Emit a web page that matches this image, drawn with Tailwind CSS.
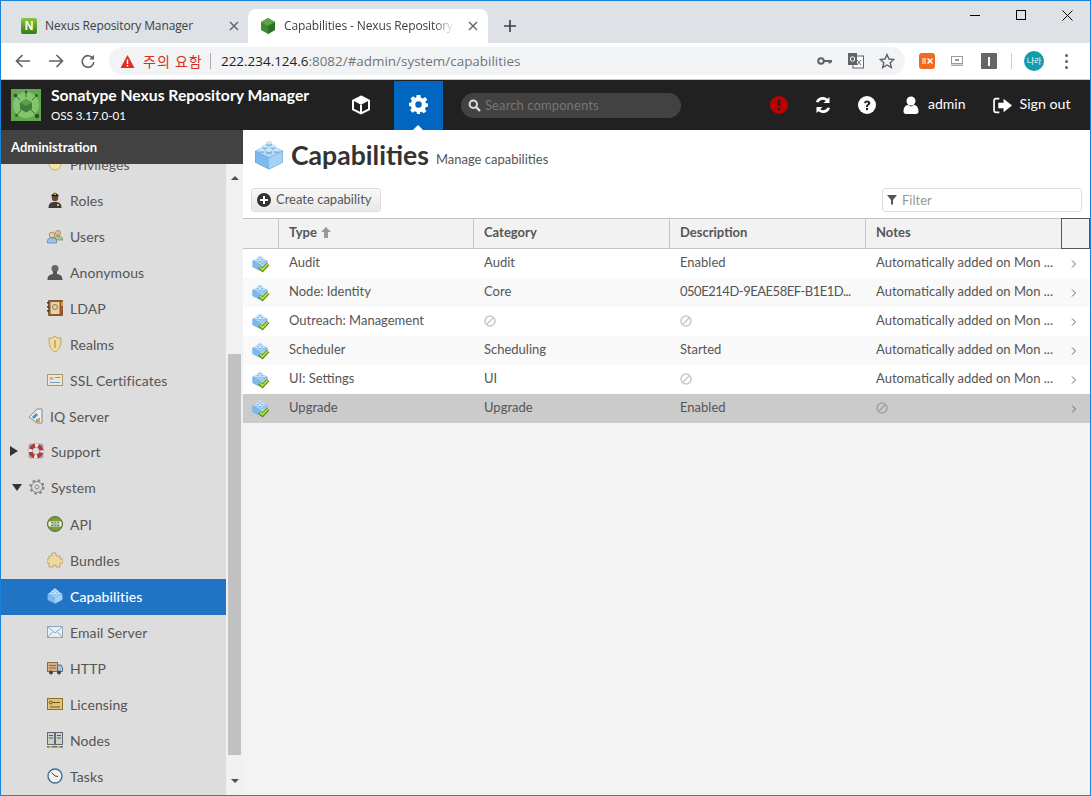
<!DOCTYPE html>
<html lang="en">
<head>
	<meta charset="UTF-8">
	<title>Capabilities - Nexus Repository Manager</title>
	<script src="https://cdn.jsdelivr.net/npm/@tailwindcss/browser@4"></script>
</head>
<body class="w-[1091px] h-[796px] overflow-hidden font-['Lato','Open_Sans',sans-serif]">
	<svg class="hidden">
		<symbol id="cube" viewBox="0 0 30 30">
			<path d="M15 4 29 11V22.500L15 29.500 1 22.500V11Z" fill="#5c9ad4"/>
			<path d="M1.500 11.500 15 18V29L1.500 22.200Z" fill="#7db9ee"/>
			<path d="M28.500 11.500 15 18V29L28.500 22.200Z" fill="#a6d2f6"/>
			<path d="M1.800 11 15 4.500 28.200 11 15 17.500Z" fill="#b5daf8"/>
			<path d="M9 6V8.500C9 9.800 13 9.800 13 8.500V6Z" fill="#7fb6e6"/>
			<ellipse cx="11" cy="6" rx="3" ry="1.700" fill="#cfe7fb"/>
			<path d="M17 6V8.500C17 9.800 21 9.800 21 8.500V6Z" fill="#7fb6e6"/>
			<ellipse cx="19" cy="6" rx="3" ry="1.700" fill="#cfe7fb"/>
			<path d="M12 2.500V5C12 6.300 18 6.300 18 5V2.500Z" fill="#7fb6e6"/>
			<ellipse cx="15" cy="2.700" rx="3.200" ry="1.800" fill="#cfe7fb"/>
			<path d="M5 10V12C5 13.300 10 13.300 10 12V10Z" fill="#7fb6e6"/>
			<ellipse cx="7.500" cy="10" rx="2.800" ry="1.600" fill="#cfe7fb"/>
			<path d="M20 10V12C20 13.300 25 13.300 25 12V10Z" fill="#7fb6e6"/>
			<ellipse cx="22.500" cy="10" rx="2.800" ry="1.600" fill="#cfe7fb"/>
			<path d="M12 10V13C12 14.300 18 14.300 18 13V10Z" fill="#7fb6e6"/>
			<ellipse cx="15" cy="10" rx="3.200" ry="1.800" fill="#cfe7fb"/>
		</symbol>
		<symbol id="cube-ok" viewBox="0 0 18 18">
			<svg x="0" y="0" width="16" height="16" viewBox="0 0 30 30"><use href="#cube" width="30" height="30"/></svg>
			<path d="M7.500 12 10.500 15 16 9" fill="none" stroke="#4f7f10" stroke-width="3.600"/>
			<path d="M7.800 12 10.500 14.700 15.700 9.200" fill="none" stroke="#b4e23a" stroke-width="1.900"/>
		</symbol>
		<symbol id="none" viewBox="0 0 12 12">
			<circle cx="6" cy="6" r="5" fill="none" stroke="currentColor" stroke-width="1.500"/>
			<path d="M2.700 9.300 9.300 2.700" stroke="currentColor" stroke-width="1.500"/>
		</symbol>
		<symbol id="chev" viewBox="0 0 8 10">
			<path d="M2 1.500 5.500 5 2 8.500" fill="none" stroke="#666" stroke-width="1"/>
		</symbol>
	</svg>

	<div class="w-full h-full border border-[#1883d7] flex flex-col bg-white">

		<!-- tab strip -->
		<div class="h-[42px] shrink-0 bg-[#dee1e6] flex items-end pl-[8px] relative font-['Open_Sans',sans-serif] text-[12px] text-[#3c4043]">
			<div class="w-[239px] h-[34px] flex items-center pl-[12px] pr-[9px]">
				<div class="w-[16px] h-[16px] bg-gradient-to-b from-[#8cc63f] to-[#2f7d10] rounded-[2px] text-white text-[12px] leading-[16px] font-bold text-center font-['Liberation_Sans',sans-serif]">N</div>
				<span class="ml-[8px] grow whitespace-nowrap tracking-[-.12px]">Nexus Repository Manager</span>
				<svg class="w-[10px] h-[10px]" viewBox="0 0 10 10"><path d="M1 1 9 9M9 1 1 9" stroke="#5f6368" stroke-width="1.400"/></svg>
			</div>
			<div class="w-[240px] h-[34px] bg-white rounded-t-[8px] flex items-center pl-[12px] pr-[10px]">
				<svg class="w-[16px] h-[16px] shrink-0" viewBox="0 0 16 16"><path d="M8 0 15 4V12L8 16 1 12V4Z" fill="#3e8a35"/><path d="M8 0 15 4 8 8 1 4Z" fill="#5aa548"/><path d="M8 8 15 4V12L8 16Z" fill="#2f7028"/></svg>
				<span class="ml-[8px] w-[170px] overflow-hidden whitespace-nowrap tracking-[-.12px] [mask-image:linear-gradient(to_right,black_88%,transparent)]">Capabilities - Nexus Repository</span>
				<svg class="w-[10px] h-[10px] ml-auto" viewBox="0 0 10 10"><path d="M1 1 9 9M9 1 1 9" stroke="#5f6368" stroke-width="1.400"/></svg>
			</div>
			<svg class="w-[12px] h-[12px] ml-[16px] mb-[11px]" viewBox="0 0 12 12"><path d="M6 0V12M0 6H12" stroke="#3c4043" stroke-width="1.600"/></svg>
			<div class="absolute right-0 top-0 flex text-black">
				<div class="w-[46px] h-[28px] flex items-center justify-center"><div class="w-[10px] h-px bg-black"></div></div>
				<div class="w-[46px] h-[28px] flex items-center justify-center"><div class="w-[10px] h-[10px] border border-black"></div></div>
				<div class="w-[46px] h-[28px] flex items-center justify-center"><svg class="w-[11px] h-[11px]" viewBox="0 0 11 11"><path d="M.5.5 10.500 10.500M10.500.5.5 10.500" stroke="#000" stroke-width="1"/></svg></div>
			</div>
		</div>

		<!-- browser toolbar -->
		<div class="h-[37px] shrink-0 bg-white border-b border-[#c8c8c8] flex items-center font-['Open_Sans',sans-serif]">
			<div class="w-[108px] flex items-center pl-[14px] gap-[17px]">
				<svg class="w-[16px] h-[14px]" viewBox="0 0 16 14"><path d="M15 7H2M7.500 1 1.500 7 7.500 13" fill="none" stroke="#5f6368" stroke-width="1.700"/></svg>
				<svg class="w-[16px] h-[14px]" viewBox="0 0 16 14"><path d="M1 7H14M8.500 1 14.500 7 8.500 13" fill="none" stroke="#5f6368" stroke-width="1.700"/></svg>
				<svg class="w-[14px] h-[14px]" viewBox="0 0 14 14"><path d="M12 4.500A5.800 5.800 0 1 0 12.800 8" fill="none" stroke="#5f6368" stroke-width="1.600"/><path d="M13 .8V5.500H8.300Z" fill="#5f6368"/></svg>
			</div>
			<div class="w-[796px] h-[28px] bg-[#f1f3f4] rounded-full flex items-center pl-[11px] text-[14px]">
				<svg class="w-[15px] h-[13px] shrink-0" viewBox="0 0 14 13"><path d="M7 0 14 13H0Z" fill="#d93025"/><path d="M6.300 4.500H7.700V9H6.300ZM6.300 10H7.700V11.400H6.300Z" fill="#fff"/></svg>
				<span class="ml-[8px] w-[60px] text-[#d93025] font-['Noto_Sans_CJK_KR',sans-serif] leading-none tracking-[1px] whitespace-nowrap">주의 요함</span>
				<div class="w-px h-[16px] bg-[#aaa] ml-[7px]"></div>
				<span class="ml-[10px] mt-[1px] text-[13.45px] text-[#202124] whitespace-nowrap">222.234.124.6<span class="text-[#70757a]">:8082/#admin/system/capabilities</span></span>
				<div class="ml-auto flex items-center gap-[15px] pr-[10px]">
					<svg class="w-[16px] h-[8px]" viewBox="0 0 16 8"><circle cx="4" cy="4" r="2.800" fill="none" stroke="#5f6368" stroke-width="2"/><path d="M7 3H15V5.500H13.500V6.500H11.500V5H7Z" fill="#5f6368"/></svg>
					<svg class="w-[16px] h-[16px]" viewBox="0 0 16 16"><rect x="5" y="3" width="10.500" height="12" fill="#fff" stroke="#5f6368"/><path d="M9 7 13 12M13 7 9 12" stroke="#5f6368"/><rect x="0" y="0" width="9" height="12" fill="#5f6368"/><circle cx="4.500" cy="6" r="2.200" fill="none" stroke="#fff"/></svg>
					<svg class="w-[16px] h-[16px]" viewBox="0 0 16 16"><path d="M8 1.500 10 6 14.800 6.500 11.200 9.700 12.300 14.500 8 12 3.700 14.500 4.800 9.700 1.200 6.500 6 6Z" fill="none" stroke="#5f6368" stroke-width="1.400"/></svg>
				</div>
			</div>
			<div class="flex items-center grow">
				<div class="ml-[14px] w-[16px] h-[16px] rounded-[3px] bg-[#f26a21] flex items-center justify-center gap-[1px]"><div class="w-[4px] h-[6px] bg-[#f8b48c]"></div><svg class="w-[6px] h-[6px]" viewBox="0 0 6 6"><path d="M.5.5 5.500 5.500M5.500.5.5 5.500" stroke="#fff" stroke-width="1.500"/></svg></div>
				<svg class="ml-[16px] w-[12px] h-[10px]" viewBox="0 0 12 10"><rect x=".5" y=".5" width="11" height="7" fill="#fff" stroke="#999"/><rect x="4" y="3" width="4" height="2" fill="#999"/><rect y="8.500" width="12" height="1.500" fill="#aaa"/></svg>
				<div class="ml-[18px] w-[16px] h-[16px] rounded-[1px] bg-[#666] flex items-center justify-center"><div class="w-[2px] h-[9px] bg-white"></div></div>
				<div class="ml-[14px] w-px h-[16px] bg-[#ccc]"></div>
				<div class="ml-[12px] w-[20px] h-[20px] rounded-full bg-[#0f9cad] text-white text-[8px] leading-[20px] text-center font-['Noto_Sans_CJK_KR',sans-serif]">나라</div>
				<div class="ml-[21px] flex flex-col gap-[3px]">
					<div class="w-[3px] h-[3px] rounded-full bg-[#5f6368]"></div>
					<div class="w-[3px] h-[3px] rounded-full bg-[#5f6368]"></div>
					<div class="w-[3px] h-[3px] rounded-full bg-[#5f6368]"></div>
				</div>
			</div>
		</div>

		<!-- nexus header -->
		<div class="h-[50px] shrink-0 bg-[#212121] flex items-center text-white">
			<svg class="ml-[10px] w-[30px] h-[32px] shrink-0" viewBox="0 0 30 32">
				<rect width="30" height="32" fill="#62a84e"/>
				<circle cx="15" cy="16" r="13" fill="#84c46c"/>
				<path d="M15 10 21 13.500V20L15 23.500 9 20V13.500Z" fill="#3f7d3a"/>
				<path d="M15 10 21 13.500 15 17 9 13.500Z" fill="#5aa04c"/>
				<path d="M5 7 9 11M25 7 21 11M15 4V8M6 26 10 21M25 26 20 21" stroke="#3c6f34" stroke-width="1"/>
				<circle cx="4.500" cy="6.500" r="1.800" fill="#2f4f2a"/>
				<circle cx="25.500" cy="6.500" r="1.300" fill="#2f4f2a"/>
				<circle cx="15" cy="3" r="1.200" fill="#2f4f2a"/>
				<circle cx="5.500" cy="26.500" r="1.300" fill="#2f4f2a"/>
				<circle cx="26" cy="27" r="2.200" fill="#2f4f2a"/>
			</svg>
			<div class="ml-[10px] w-[300px] shrink-0">
				<div class="text-[15.7px] font-bold leading-[20px] whitespace-nowrap -mt-[1px]">Sonatype Nexus Repository Manager</div>
				<div class="text-[11.6px] leading-[16px] mt-[3px]">OSS 3.17.0-01</div>
			</div>
			<svg class="w-[20px] h-[20px] shrink-0" viewBox="0 0 20 20"><path d="M10 1.500 18 5.500V14.500L10 18.500 2 14.500V5.500Z" fill="none" stroke="#fff" stroke-width="2"/><path d="M2 5.500 10 9.800 18 5.500 10 1.500Z" fill="#fff"/><path d="M10 9.800V18.500" stroke="#fff" stroke-width="2"/></svg>
			<div class="ml-[23px] w-[49px] h-[49px] self-end bg-[#0066bf] flex items-center justify-center relative">
				<svg class="w-[19px] h-[19px] mb-[2px]" viewBox="0 0 20 20"><path fill="#fff" fill-rule="evenodd" d="M8 0H12L12.500 2.800 14.600 3.700 17 2 19.300 5 17.300 7 17.800 8.800 20 9V12L17.500 12.800 16.800 14.700 18.300 17 15.500 19.300 13.400 17.500 11.700 18.200 11.500 20H8.500L8 18 6 17.200 3.800 18.800 1.200 16 2.800 13.800 2 12 0 11.500V8.500L2.300 8 3 6 1.600 3.800 4.300 1.200 6.300 2.800 7.800 2.300ZM10 6.600A3.400 3.400 0 1 0 10 13.400 3.400 3.400 0 0 0 10 6.600Z"/></svg>
				<div class="absolute bottom-0 left-[19px] w-0 h-0 border-x-[5px] border-x-transparent border-b-[5px] border-b-white"></div>
			</div>
			<div class="ml-[18px] w-[220px] h-[25px] rounded-full bg-[#424242] flex items-center pl-[7px] text-[13px] text-[#757575]">
				<svg class="w-[13px] h-[13px]" viewBox="0 0 13 13"><circle cx="5.300" cy="5.300" r="3.700" fill="none" stroke="#ddd" stroke-width="2"/><path d="M8 8 12 12" stroke="#ddd" stroke-width="2.400"/></svg>
				<span class="ml-[4px] mt-[2px] tracking-[.1px]">Search components</span>
			</div>
			<svg class="ml-[89px] w-[18px] h-[18px] shrink-0" viewBox="0 0 18 18"><circle cx="9" cy="9" r="9" fill="#c00000"/><path d="M7.300 3.500H10.700L10.200 10.500H7.800ZM7.700 12H10.300V14.500H7.700Z" fill="#222"/></svg>
			<svg class="ml-[26px] w-[18px] h-[18px] shrink-0" viewBox="0 0 18 18"><path fill="#fff" d="M15.500 1V7H9.500L11.800 4.800C9.500 3 6 3.700 4.500 6.500L1.800 6C3.500 1 9.500-.5 13.500 2.800ZM2.500 17V11H8.500L6.200 13.200C8.500 15 12 14.300 13.500 11.500L16.200 12C14.500 17 8.500 18.500 4.500 15.200Z"/></svg>
			<svg class="ml-[26px] w-[18px] h-[18px] shrink-0" viewBox="0 0 18 18"><circle cx="9" cy="9" r="9" fill="#fff"/><path d="M6 7C6 3.500 12.300 3.500 12.300 7 12.300 9.300 9.900 9 9.900 11H8C8 8.300 10 8.500 10 7 10 5.800 8 5.800 8 7.300Z" fill="#212121"/><rect x="8" y="12" width="2" height="2.200" fill="#212121"/></svg>
			<svg class="ml-[27px] w-[16px] h-[18px] shrink-0" viewBox="0 0 16 18"><circle cx="8" cy="5" r="4.500" fill="#fff"/><path d="M.5 15.500C.5 11 3 9 5 9L8 10.500 11 9C13 9 15.500 11 15.500 15.500 15.500 17 14.500 18 13 18H3C1.500 18 .5 17 .5 15.500Z" fill="#fff"/></svg>
			<span class="ml-[9px] mb-[3px] text-[14px]">admin</span>
			<svg class="ml-[27px] w-[19px] h-[17px] shrink-0" viewBox="0 0 18 16"><path d="M6 1.500H3C2 1.500 1 2.500 1 3.500V12.500C1 13.500 2 14.500 3 14.500H6" fill="none" stroke="#fff" stroke-width="1.600"/><path d="M5 5.500H10V1.500L18 8 10 14.500V10.500H5Z" fill="#fff"/></svg>
			<span class="ml-[8px] mb-[3px] text-[14.2px] whitespace-nowrap">Sign out</span>
		</div>

		<!-- page body -->
		<div class="flex grow min-h-0">

			<!-- admin panel -->
			<div class="w-[242px] shrink-0 flex flex-col">
				<div class="h-[34px] shrink-0 bg-[#424242] text-white text-[13px] font-bold flex items-center pl-[10px] pt-[2px]">Administration</div>
				<div class="flex grow min-h-0">
					<div class="w-[225px] shrink-0 bg-[#dddddd] overflow-hidden text-[14px] text-[#555] tracking-[.1px]">
						<div class="-mt-[17px] [&>div]:h-[36px] [&>div]:flex [&>div]:items-center [&>div]:pb-[2px]">
							<div class="pl-[46px] gap-[7px]"><svg class="w-[16px] h-[16px]" viewBox="0 0 16 16"><circle cx="8" cy="8" r="6" fill="#f3e2a9" stroke="#c9ad6a"/></svg>Privileges</div>
							<div class="pl-[46px] gap-[7px]"><svg class="w-[16px] h-[16px]" viewBox="0 0 16 16"><path d="M1.500 16C1.500 11 4 10 8 10S14.500 11 14.500 16Z" fill="#3c3c3c"/><circle cx="8" cy="6" r="3.200" fill="#6b4a2f"/><path d="M4.500 3 8 .5 11.500 3V4.500H4.500Z" fill="#222"/><rect x="7" y="1.500" width="2" height="1.500" fill="#e6b93a"/><rect x="10" y="12" width="2" height="2" fill="#e6b93a"/></svg>Roles</div>
							<div class="pl-[46px] gap-[7px]"><svg class="w-[16px] h-[16px]" viewBox="0 0 16 16"><circle cx="11" cy="5" r="2.600" fill="#e8bd94" stroke="#8a6a4a" stroke-width=".6"/><path d="M7 12C7 9 9 8 11 8S16 9 16 12Z" fill="#a8c88a" stroke="#5f8a45" stroke-width=".6"/><circle cx="5" cy="7" r="2.800" fill="#f0c8a0" stroke="#8a5a3a" stroke-width=".6"/><path d="M.5 15V12.500C.5 10.500 3 10 5 10S9.500 10.500 9.500 12.500V15Z" fill="#9cc4e4" stroke="#3f6f9f" stroke-width=".6"/></svg>Users</div>
							<div class="pl-[46px] gap-[7px]"><svg class="w-[16px] h-[16px]" viewBox="0 0 16 16"><circle cx="8" cy="4.500" r="3.500" fill="#666"/><path d="M6 7H10V10C13 10.500 15.500 11.500 15.500 16H.5C.5 11.500 3 10.500 6 10Z" fill="#555"/></svg>Anonymous</div>
							<div class="pl-[46px] gap-[7px]"><svg class="w-[16px] h-[16px]" viewBox="0 0 16 16"><rect x="1" y="0" width="15" height="16" rx="1" fill="#8a5a2e"/><rect x="3.500" y="2" width="9" height="12" fill="#e6d2ac"/><circle cx="8" cy="7" r="2.500" fill="none" stroke="#9a7a4a"/><rect x="0" y="2" width="2" height="1.500" fill="#333"/><rect x="0" y="6" width="2" height="1.500" fill="#333"/><rect x="0" y="10" width="2" height="1.500" fill="#333"/><rect x="14" y="2" width="2" height="4" fill="#d8a030"/><rect x="14" y="7" width="2" height="4" fill="#b85030"/></svg>LDAP</div>
							<div class="pl-[46px] gap-[7px]"><svg class="w-[16px] h-[16px]" viewBox="0 0 16 16"><path d="M8 0 10.500 2 14 2C14 8 13.500 13 8 16 2.500 13 2 8 2 2L5.500 2Z" fill="#f0dca0" stroke="#b9a468"/><path d="M8 4V12" stroke="#c9b070" stroke-width="2"/></svg>Realms</div>
							<div class="pl-[46px] gap-[7px]"><svg class="w-[16px] h-[16px]" viewBox="0 0 16 16"><rect x=".5" y="2.500" width="15" height="11" fill="#efe6d2" stroke="#a89878"/><rect x="2.500" y="5" width="4" height="3" fill="#c9b898"/><path d="M8 5.500H13.500M3 10.500H13" stroke="#6f9fc8"/></svg>SSL Certificates</div>
							<div class="pl-[27px] gap-[6px]"><svg class="w-[16px] h-[16px]" viewBox="0 0 16 16"><path d="M1 9 9 1H14V15H9Z" fill="#eee" stroke="#888"/><path d="M4 9 8 5 10 7 6 11Z" fill="#4f8fc0"/><path d="M11 10V14" stroke="#c8863a" stroke-width="1.500"/><path d="M9 11V14" stroke="#6a9a3a" stroke-width="1.500"/></svg>IQ Server</div>
							<div class="pl-[9px] !pb-[4px]"><div class="w-0 h-0 border-y-[5px] border-y-transparent border-l-[8px] border-l-[#333]"></div><svg class="ml-[10px] w-[16px] h-[16px]" viewBox="0 0 16 16"><rect x=".5" y=".5" width="15" height="15" rx="2" fill="#aaa"/><circle cx="8" cy="8" r="5.500" fill="none" stroke="#b03a3a" stroke-width="4"/><circle cx="8" cy="8" r="5.500" fill="none" stroke="#eee" stroke-width="4" stroke-dasharray="3 5.640" stroke-dashoffset="1.500"/><circle cx="8" cy="8" r="3" fill="#ddd"/></svg><span class="ml-[7px]">Support</span></div>
							<div class="pl-[11px] !pb-[4px]"><div class="w-0 h-0 border-x-[5px] border-x-transparent border-t-[7px] border-t-[#333]"></div><svg class="ml-[7px] w-[16px] h-[16px]" viewBox="0 0 16 16"><circle cx="8" cy="8" r="5.500" fill="none" stroke="#888" stroke-width="1"/><circle cx="8" cy="8" r="6.500" fill="none" stroke="#888" stroke-width="2.400" stroke-dasharray="2.400 2.700"/><circle cx="8" cy="8" r="2" fill="none" stroke="#888"/></svg><span class="ml-[6px]">System</span></div>
							<div class="pl-[46px] gap-[7px]"><svg class="w-[16px] h-[16px]" viewBox="0 0 16 16"><circle cx="8" cy="8" r="7.500" fill="#7b9a3c" stroke="#55702a"/><rect x="1.500" y="5.500" width="13" height="5" rx="1" fill="#f2f2e8"/><text x="8" y="10" font-size="5" font-weight="700" text-anchor="middle" fill="#4f6a24">202</text></svg>API</div>
							<div class="pl-[46px] gap-[7px]"><svg class="w-[16px] h-[16px]" viewBox="0 0 16 16"><path d="M5 1H9V4H13V7H16V11H13V15H9V13H6V15H2V11H0V7H2V4H5Z" fill="#f0d9a0" stroke="#b89a68" stroke-width=".8"/></svg>Bundles</div>
							<div class="pl-[46px] gap-[7px] bg-[#2173c4] text-white font-medium"><svg class="w-[16px] h-[16px]"><use href="#cube"/></svg>Capabilities</div>
							<div class="pl-[46px] gap-[7px]"><svg class="w-[16px] h-[16px]" viewBox="0 0 16 16"><rect x=".5" y="2.500" width="15" height="11" fill="#e8f0f6" stroke="#8fa8bc"/><path d="M.5 2.500 8 9 15.500 2.500M.5 13.500 6 7.500M15.500 13.500 10 7.500" fill="none" stroke="#8fa8bc"/></svg>Email Server</div>
							<div class="pl-[46px] gap-[7px]"><svg class="w-[16px] h-[16px]" viewBox="0 0 16 16"><rect x=".5" y="2.500" width="10" height="9" fill="#d8b088" stroke="#8a6a48"/><path d="M2 5.500H9M2 8H9" stroke="#8a6a48"/><path d="M10.500 5H14L15.500 8V11.500H10.500Z" fill="#a8c8e0" stroke="#4f6f8a"/><circle cx="4" cy="12.500" r="2" fill="#444"/><circle cx="12" cy="12.500" r="2" fill="#444"/></svg>HTTP</div>
							<div class="pl-[46px] gap-[7px]"><svg class="w-[16px] h-[16px]" viewBox="0 0 16 16"><rect x=".5" y="2.500" width="15" height="11" fill="#e2c478" stroke="#8a6f30"/><circle cx="3.800" cy="6.500" r="1.500" fill="none" stroke="#6a5220"/><path d="M5.500 6.500H13M3 11H13" stroke="#6a5220"/></svg>Licensing</div>
							<div class="pl-[46px] gap-[7px]"><svg class="w-[16px] h-[16px]" viewBox="0 0 16 16"><rect x=".5" y=".5" width="7" height="12" fill="#c8d4c8" stroke="#667"/><rect x="8.500" y=".5" width="7" height="12" fill="#c8d4c8" stroke="#667"/><path d="M2 3.500H6M2 6H6M10 3.500H14M10 6H14" stroke="#556"/><rect y="14" width="16" height="1.500" fill="#666"/><rect x="2" y="14" width="3" height="1.500" fill="#e6b93a"/><rect x="10" y="14" width="3" height="1.500" fill="#e6b93a"/></svg>Nodes</div>
							<div class="pl-[46px] gap-[7px]"><svg class="w-[16px] h-[16px]" viewBox="0 0 16 16"><circle cx="8" cy="8" r="7" fill="#f4f2e8" stroke="#3f6f9f" stroke-width="1.400"/><path d="M4.500 4.500 8 8 11 8.500" fill="none" stroke="#444"/></svg>Tasks</div>
						</div>
					</div>
					<div class="w-[17px] shrink-0 bg-[#f1f1f1] flex flex-col items-center">
						<div class="h-[18px] shrink-0 flex items-end justify-center pb-[2px]"><div class="w-0 h-0 border-x-[4px] border-x-transparent border-b-[4px] border-b-[#505050]"></div></div>
						<div class="mt-[172px] w-[13px] h-[401px] bg-[#c1c1c1]"></div>
						<div class="mt-[24px] w-0 h-0 border-x-[4px] border-x-transparent border-t-[4px] border-t-[#505050]"></div>
					</div>
				</div>
			</div>

			<!-- capabilities -->
			<div class="grow min-w-0 bg-[#f3f3f3] flex flex-col text-[13px] text-[#555]">
				<div class="h-[88px] shrink-0 bg-white px-[8px] pt-[10px]">
					<div class="flex items-center h-[30px]">
						<svg class="ml-[3px] w-[30px] h-[30px]"><use href="#cube"/></svg>
						<span class="ml-[7px] text-[26.6px] font-bold text-[#333] leading-none">Capabilities</span>
						<span class="ml-[7px] mt-[10px] text-[13px] text-[#555]">Manage capabilities</span>
					</div>
					<div class="mt-[18px] flex justify-between items-center">
						<button class="w-[130px] h-[24px] rounded-[3px] border border-[#ddd] bg-gradient-to-b from-[#f8f8f8] to-[#e8e8e8] flex items-center pl-[5px] text-[13px] text-[#555]">
							<svg class="w-[14px] h-[14px]" viewBox="0 0 14 14"><circle cx="7" cy="7" r="7" fill="#333"/><path d="M7 3V11M3 7H11" stroke="#fff" stroke-width="2"/></svg>
							<span class="ml-[5px] whitespace-nowrap">Create capability</span>
						</button>
						<div class="w-[200px] h-[24px] rounded-[3px] border border-[#ddd] bg-white flex items-center pl-[4px] text-[#999]">
							<svg class="w-[10px] h-[10px]" viewBox="0 0 10 10"><path d="M0 0H10L6 5V10L4 9V5Z" fill="#555"/></svg>
							<span class="ml-[5px] mt-[2px]">Filter</span>
						</div>
					</div>
				</div>

				<!-- grid -->
				<div class="h-[31px] shrink-0 bg-[#f2f2f2] border-y border-[#c4c4c4] grid grid-cols-[35px_195px_196px_196px_196px_1fr] font-bold text-[#555] [&>div]:border-l [&>div]:border-[#c4c4c4] [&>div]:pl-[10px] [&>div]:pb-[2px] [&>div]:flex [&>div]:items-center">
					<div class="!border-l-0"></div>
					<div>Type<svg class="ml-[4px] w-[10px] h-[11px]" viewBox="0 0 10 11"><path d="M5 0 10 5H7V11H3V5H0Z" fill="#999"/></svg></div>
					<div>Category</div>
					<div>Description</div>
					<div>Notes</div>
					<div class="border !border-[#555] -my-px"></div>
				</div>
				<div class="[&>div]:h-[29px] [&>div]:grid [&>div]:grid-cols-[35px_195px_196px_196px_196px_1fr] [&>div]:items-center [&_span]:pl-[11px] [&_span]:pb-[2px] [&_span]:whitespace-nowrap">
					<div class="bg-white">
						<svg class="ml-[9px] w-[18px] h-[18px]"><use href="#cube-ok"/></svg>
						<span>Audit</span><span>Audit</span><span>Enabled</span><span>Automatically added on Mon ...</span>
						<svg class="ml-[9px] w-[8px] h-[10px]"><use href="#chev"/></svg>
					</div>
					<div class="bg-[#f9f9f9]">
						<svg class="ml-[9px] w-[18px] h-[18px]"><use href="#cube-ok"/></svg>
						<span>Node: Identity</span><span>Core</span><span class="tracking-[-.48px]">050E214D-9EAE58EF-B1E1D...</span><span>Automatically added on Mon ...</span>
						<svg class="ml-[9px] w-[8px] h-[10px]"><use href="#chev"/></svg>
					</div>
					<div class="bg-white">
						<svg class="ml-[9px] w-[18px] h-[18px]"><use href="#cube-ok"/></svg>
						<span>Outreach: Management</span><span class="text-[#c8c8c8]"><svg class="w-[12px] h-[12px]"><use href="#none"/></svg></span><span class="text-[#c8c8c8]"><svg class="w-[12px] h-[12px]"><use href="#none"/></svg></span><span>Automatically added on Mon ...</span>
						<svg class="ml-[9px] w-[8px] h-[10px]"><use href="#chev"/></svg>
					</div>
					<div class="bg-[#f9f9f9]">
						<svg class="ml-[9px] w-[18px] h-[18px]"><use href="#cube-ok"/></svg>
						<span>Scheduler</span><span>Scheduling</span><span>Started</span><span>Automatically added on Mon ...</span>
						<svg class="ml-[9px] w-[8px] h-[10px]"><use href="#chev"/></svg>
					</div>
					<div class="bg-white">
						<svg class="ml-[9px] w-[18px] h-[18px]"><use href="#cube-ok"/></svg>
						<span>UI: Settings</span><span>UI</span><span class="text-[#c8c8c8]"><svg class="w-[12px] h-[12px]"><use href="#none"/></svg></span><span>Automatically added on Mon ...</span>
						<svg class="ml-[9px] w-[8px] h-[10px]"><use href="#chev"/></svg>
					</div>
					<div class="bg-[#cbcbcb]">
						<svg class="ml-[9px] w-[18px] h-[18px]"><use href="#cube-ok"/></svg>
						<span>Upgrade</span><span>Upgrade</span><span>Enabled</span><span class="text-[#a2a2a2]"><svg class="w-[12px] h-[12px]"><use href="#none"/></svg></span>
						<svg class="ml-[9px] w-[8px] h-[10px]"><use href="#chev"/></svg>
					</div>
				</div>
			</div>
		</div>
	</div>
</body>
</html>
